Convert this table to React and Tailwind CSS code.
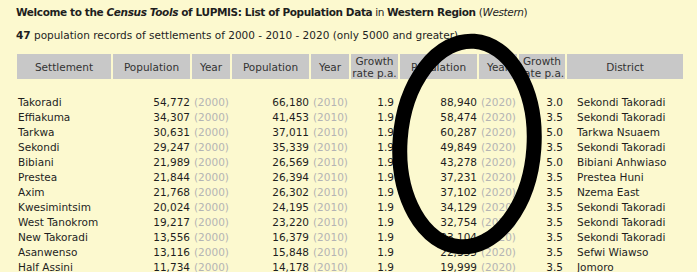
const rows = [
  ['Takoradi', '54,772', '66,180', '1.9', '88,940', '3.0', 'Sekondi Takoradi'],
  ['Effiakuma', '34,307', '41,453', '1.9', '58,474', '3.5', 'Sekondi Takoradi'],
  ['Tarkwa', '30,631', '37,011', '1.9', '60,287', '5.0', 'Tarkwa Nsuaem'],
  ['Sekondi', '29,247', '35,339', '1.9', '49,849', '3.5', 'Sekondi Takoradi'],
  ['Bibiani', '21,989', '26,569', '1.9', '43,278', '5.0', 'Bibiani Anhwiaso'],
  ['Prestea', '21,844', '26,394', '1.9', '37,231', '3.5', 'Prestea Huni'],
  ['Axim', '21,768', '26,302', '1.9', '37,102', '3.5', 'Nzema East'],
  ['Kwesimintsim', '20,024', '24,195', '1.9', '34,129', '3.5', 'Sekondi Takoradi'],
  ['West Tanokrom', '19,217', '23,220', '1.9', '32,754', '3.5', 'Sekondi Takoradi'],
  ['New Takoradi', '13,556', '16,379', '1.9', '23,104', '3.5', 'Sekondi Takoradi'],
  ['Asanwenso', '13,116', '15,848', '1.9', '22,355', '3.5', 'Sefwi Wiawso'],
  ['Half Assini', '11,734', '14,178', '1.9', '19,999', '3.5', 'Jomoro'],
]

// Breiten der Spalten in px (Zellbreite ohne Abstand)
const cols = [94, 77, 38, 77, 38, 47, 77, 38, 46, 116]

function Kopf({ children }) {
  return (
    <th className="h-[25px] bg-[#c8c8c8] p-0 text-center align-middle font-normal leading-[12px] text-[#333]">
      {children}
    </th>
  )
}

function Jahr({ children }) {
  return <td className="p-0 pl-[2px] text-left text-[#b4b4b4]">({children})</td>
}

export default function App() {
  return (
    <div className="relative min-h-screen overflow-hidden bg-[#fcf9cf] font-['DejaVu_Sans',sans-serif] text-[10.5px] text-[#1e1e1e]">
      <div className="px-[15px] pt-[6px]">
        <p className="pl-[1px] leading-[13px] [letter-spacing:-0.38px]">
          <b>
            Welcome to the <i>Census Tools</i> of LUPMIS: List of Population Data
          </b>{' '}
          in <b>Western Region</b> (<i>Western</i>)
        </p>
        <p className="mt-[10px] pl-[1px] leading-[13px]">
          <b>47</b> population records of settlements of 2000 - 2010 - 2020 (only 5000 and greater)
        </p>

        <table className="mt-[10px] w-[670px] table-fixed border-separate border-spacing-[2px] leading-[13px]">
          <colgroup>
            {cols.map((w, i) => (
              <col key={i} style={{ width: w }} />
            ))}
          </colgroup>
          <thead>
            <tr>
              <Kopf>Settlement</Kopf>
              <Kopf>Population</Kopf>
              <Kopf>Year</Kopf>
              <Kopf>Population</Kopf>
              <Kopf>Year</Kopf>
              <Kopf>
                Growth
                <br />
                rate p.a.
              </Kopf>
              <Kopf>Population</Kopf>
              <Kopf>Year</Kopf>
              <Kopf>
                Growth
                <br />
                rate p.a.
              </Kopf>
              <Kopf>District</Kopf>
            </tr>
          </thead>
          <tbody>
            <tr className="h-[13px]">
              <td colSpan={10} className="p-0" />
            </tr>
            {rows.map((r) => (
              <tr key={r[0]} className="h-[13px]">
                <td className="whitespace-nowrap p-0 pl-[1px]">{r[0]}</td>
                <td className="p-0 text-right">{r[1]}</td>
                <Jahr>2000</Jahr>
                <td className="p-0 text-right">{r[2]}</td>
                <Jahr>2010</Jahr>
                <td className="p-0 pr-[4px] text-right">{r[3]}</td>
                <td className="p-0 text-right">{r[4]}</td>
                <Jahr>2020</Jahr>
                <td className="p-0 pr-[2px] text-right">{r[5]}</td>
                <td className="whitespace-nowrap p-0 pl-[10px]">{r[6]}</td>
              </tr>
            ))}
          </tbody>
        </table>
      </div>

      {/* handgezeichneter Kreis über der 2020-Spalte */}
      <svg
        className="pointer-events-none absolute left-0 top-0"
        width="697"
        height="272"
        viewBox="0 0 697 272"
      >
        <ellipse
          cx="467"
          cy="144"
          rx="67"
          ry="103"
          fill="none"
          stroke="#000"
          strokeWidth="15"
          transform="rotate(4 467 144)"
        />
      </svg>
    </div>
  )
}
